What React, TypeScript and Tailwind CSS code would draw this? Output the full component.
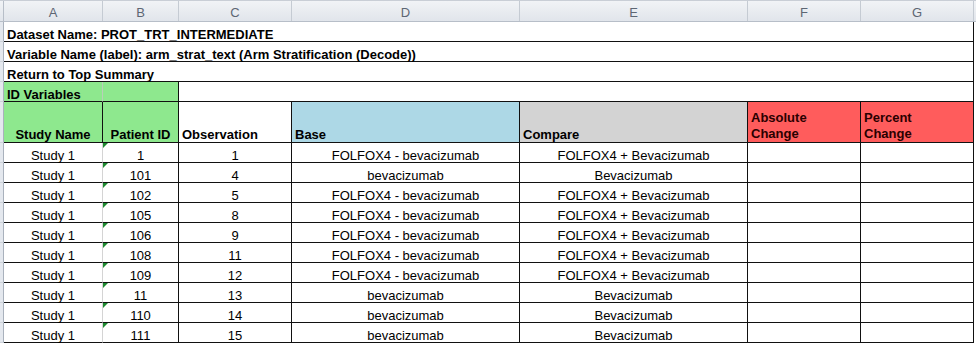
const GRID =
  "grid grid-cols-[4px_99px_76px_113px_228px_228px_113px_113px_2px]";

const rows = [
  { pid: "1", obs: "1", base: "FOLFOX4 - bevacizumab", cmp: "FOLFOX4 + Bevacizumab" },
  { pid: "101", obs: "4", base: "bevacizumab", cmp: "Bevacizumab" },
  { pid: "102", obs: "5", base: "FOLFOX4 - bevacizumab", cmp: "FOLFOX4 + Bevacizumab" },
  { pid: "105", obs: "8", base: "FOLFOX4 - bevacizumab", cmp: "FOLFOX4 + Bevacizumab" },
  { pid: "106", obs: "9", base: "FOLFOX4 - bevacizumab", cmp: "FOLFOX4 + Bevacizumab" },
  { pid: "108", obs: "11", base: "FOLFOX4 - bevacizumab", cmp: "FOLFOX4 + Bevacizumab" },
  { pid: "109", obs: "12", base: "FOLFOX4 - bevacizumab", cmp: "FOLFOX4 + Bevacizumab" },
  { pid: "11", obs: "13", base: "bevacizumab", cmp: "Bevacizumab" },
  { pid: "110", obs: "14", base: "bevacizumab", cmp: "Bevacizumab" },
  { pid: "111", obs: "15", base: "bevacizumab", cmp: "Bevacizumab" },
];

function Gutter() {
  return <div className="bg-[#e4e8ee] border-r border-b border-r-[#a9b1bc] border-b-[#cdd2d9]" />;
}

function Tail() {
  return <div className="bg-white" />;
}

function DataRow({ pid, obs, base, cmp }: { pid: string; obs: string; base: string; cmp: string }) {
  const cell = "flex items-end leading-[13px] border-r border-b border-[#111]";
  return (
    <div className={`${GRID} h-[20px] shrink-0`}>
      <Gutter />
      <div className="flex items-end justify-center leading-[13px] border-r border-b border-r-[#d4d4d4] border-b-[#111]">
        Study 1
      </div>
      <div className={`${cell} justify-center relative`}>
        <span className="absolute top-0 left-0 w-0 h-0 border-t-[5px] border-t-[#1d8a2f] border-r-[5px] border-r-transparent" />
        {pid}
      </div>
      <div className={`${cell} justify-center`}>{obs}</div>
      <div className={`${cell} justify-center`}>{base}</div>
      <div className={`${cell} justify-center`}>{cmp}</div>
      <div className={cell} />
      <div className={cell} />
      <Tail />
    </div>
  );
}

export default function App() {
  const letters = ["A", "B", "C", "D", "E", "F", "G"];
  const dark = "border-[#111]";

  return (
    <div className="w-[976px] h-[344px] overflow-hidden bg-white text-black text-[13px] font-['Liberation_Sans',Arial,sans-serif] flex flex-col">
      {/* Column letters */}
      <div className={`${GRID} h-[22px] shrink-0 bg-gradient-to-b from-[#f1f3f6] to-[#e1e5eb] border-t border-t-[#c9ced6] border-b border-b-[#b7bec8]`}>
        <div className="border-r border-r-[#b7bec8]" />
        {letters.map((l) => (
          <div
            key={l}
            className="flex items-end justify-center pb-[2px] leading-[13px] text-[#5d6673] border-r border-r-[#c5cbd3]"
          >
            {l}
          </div>
        ))}
        <div />
      </div>

      {/* Title rows */}
      {[
        "Dataset Name: PROT_TRT_INTERMEDIATE",
        "Variable Name (label): arm_strat_text (Arm Stratification (Decode))",
        "Return to Top Summary",
      ].map((t) => (
        <div key={t} className={`${GRID} h-[20px] shrink-0`}>
          <Gutter />
          <div className={`col-span-7 flex items-end pl-[3px] font-bold leading-[13px] whitespace-nowrap border-r border-b ${dark}`}>
            {t}
          </div>
          <Tail />
        </div>
      ))}

      {/* ID Variables */}
      <div className={`${GRID} h-[20px] shrink-0`}>
        <Gutter />
        <div className="bg-[#8ee88e] flex items-end pl-[3px] font-bold leading-[13px] whitespace-nowrap border-r border-b border-r-[#b9cfb9] border-b-[#111]">
          ID Variables
        </div>
        <div className={`bg-[#8ee88e] border-r border-b ${dark}`} />
        <div className={`col-span-5 border-r border-b ${dark}`} />
        <Tail />
      </div>

      {/* Header row */}
      <div className={`${GRID} h-[41px] shrink-0 font-bold`}>
        <Gutter />
        <div className={`bg-[#8ee88e] flex items-end justify-center leading-[13px] pb-[1px] border-r border-b ${dark}`}>
          Study Name
        </div>
        <div className={`bg-[#8ee88e] flex items-end justify-center leading-[13px] pb-[1px] border-r border-b ${dark}`}>
          Patient ID
        </div>
        <div className={`flex items-end pl-[3px] leading-[13px] pb-[1px] border-r border-b ${dark}`}>
          Observation
        </div>
        <div className={`bg-[#add8e6] flex items-end pl-[3px] leading-[13px] pb-[1px] border-r border-b ${dark}`}>
          Base
        </div>
        <div className={`bg-[#d3d3d3] flex items-end pl-[3px] leading-[13px] pb-[1px] border-r border-b ${dark}`}>
          Compare
        </div>
        <div className={`bg-[#ff5c5c] text-[#2a0000] flex items-end pl-[3px] leading-[16px] border-r border-b ${dark}`}>
          Absolute
          <br />
          Change
        </div>
        <div className={`bg-[#ff5c5c] text-[#2a0000] flex items-end pl-[3px] leading-[16px] border-r border-b ${dark}`}>
          Percent
          <br />
          Change
        </div>
        <Tail />
      </div>

      {rows.map((r, i) => (
        <DataRow key={i} {...r} />
      ))}
    </div>
  );
}
